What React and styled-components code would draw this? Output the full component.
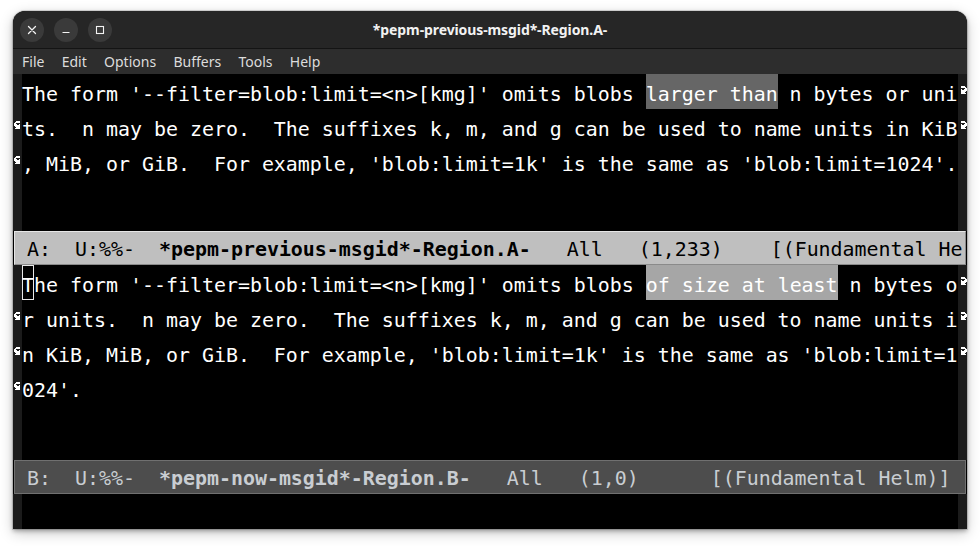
import React from "react";
import styled, { createGlobalStyle } from "styled-components";

const Global = createGlobalStyle`
  html, body { margin: 0; padding: 0; background: #ffffff; }
  body { width: 980px; height: 546px; overflow: hidden; }
`;

const MONO = `"DejaVu Sans Mono", "Liberation Mono", monospace`;
const UI = `"Noto Sans", "Open Sans", sans-serif`;

const Page = styled.div`
  box-sizing: border-box;
  width: 980px;
  height: 546px;
  padding: 11px 13px 0 13px;
`;

const Window = styled.div`
  width: 954px;
  height: 518px;
  display: flex;
  flex-direction: column;
  border-radius: 12px 12px 0 0;
  overflow: hidden;
  background: #000;
  box-shadow: 0 0 0 1px rgba(0, 0, 0, 0.12), 0 2px 4px rgba(0, 0, 0, 0.3),
    0 4px 14px rgba(0, 0, 0, 0.22);
`;

const TitleBar = styled.div`
  flex: none;
  height: 37px;
  display: grid;
  grid-template-columns: 1fr auto 1fr;
  align-items: center;
  background: #262626;
  border-bottom: 1px solid #141414;
`;

const Controls = styled.div`
  display: flex;
  gap: 10px;
  padding-left: 7px;
`;

const CircleButton = styled.div`
  width: 24px;
  height: 24px;
  border-radius: 50%;
  background: #3a3a3a;
  display: flex;
  align-items: center;
  justify-content: center;
`;

const Title = styled.div`
  font-family: ${UI};
  font-weight: 700;
  font-size: 14px;
  color: #f2f2f2;
  white-space: nowrap;
  letter-spacing: -0.1px;
`;

const MenuBar = styled.div`
  flex: none;
  height: 25px;
  display: flex;
  align-items: center;
  gap: 17.3px;
  padding-left: 9px;
  background: #2d2d2d;
  font-family: ${UI};
  font-size: 14px;
  color: #dcdcdc;
`;

const MenuItem = styled.span`
  white-space: nowrap;
`;

const Body = styled.div`
  flex: none;
  height: ${(p) => p.$h}px;
  display: flex;
  background: #1b1b1b;
  overflow: hidden;
`;

const Fringe = styled.div`
  width: 9px;
  flex: none;
  display: flex;
  flex-direction: column;
`;

const FringeCell = styled.div`
  height: 35px;
  box-sizing: border-box;
  padding-top: 12px;
  padding-left: ${(p) => (p.$side === "left" ? "1px" : "0")};
  display: flex;
  justify-content: ${(p) => (p.$side === "left" ? "flex-start" : "flex-end")};
  align-items: flex-start;
`;

const TextArea = styled.div`
  width: 936px;
  flex: none;
  background: #000;
  display: flex;
  flex-direction: column;
  font-family: ${MONO};
  font-size: 19.93px;
  color: #ffffff;
`;

const Line = styled.div`
  height: 35px;
  display: flex;
  white-space: pre;
`;

const Seg = styled.span`
  display: block;
  box-sizing: border-box;
  height: 35px;
  padding-top: 6px;
  line-height: 29px;
  background: ${(p) => p.$bg || "transparent"};
  box-shadow: ${(p) => (p.$cursor ? "inset 0 0 0 1px #e8e8e8" : "none")};
`;

const ModeLine = styled.div`
  flex: none;
  height: 34px;
  box-sizing: border-box;
  margin: 0 1px;
  padding-top: 4px;
  line-height: 28px;
  white-space: pre;
  overflow: hidden;
  font-family: ${MONO};
  font-size: 19.93px;
  border: 1px solid;
  border-color: ${(p) =>
    p.$active ? "#e6e6e6 #8a8a8a #8a8a8a #e6e6e6" : "#707070"};
  background: ${(p) => (p.$active ? "#bfbfbf" : "#4d4d4d")};
  color: ${(p) => (p.$active ? "#000000" : "#c9cdd2")};
`;

const Bold = styled.b`
  font-weight: 700;
`;

const LEFT_CURLY = [0x3c, 0x7c, 0xc0, 0xe4, 0xfc, 0x7c, 0x3c, 0x7c];
const RIGHT_CURLY = [0x3c, 0x3e, 0x03, 0x27, 0x3f, 0x3e, 0x3c, 0x3e];

function Bitmap({ bits }) {
  const rects = [];
  bits.forEach((row, y) => {
    for (let x = 0; x < 8; x++) {
      if (row & (0x80 >> x)) {
        rects.push(<rect key={`${x}-${y}`} x={x} y={y} width="1" height="1" />);
      }
    }
  });
  return (
    <svg width="8" height="8" viewBox="0 0 8 8" fill="#ffffff" shapeRendering="crispEdges">
      {rects}
    </svg>
  );
}

function CloseIcon() {
  return (
    <svg width="10" height="10" viewBox="0 0 10 10" stroke="#f4f4f4" strokeWidth="1.3" strokeLinecap="round">
      <path d="M1.5 1.5 L8.5 8.5 M8.5 1.5 L1.5 8.5" />
    </svg>
  );
}
function MinIcon() {
  return (
    <svg width="10" height="10" viewBox="0 0 10 10" stroke="#f4f4f4" strokeWidth="1.2">
      <path d="M1.5 7.5 H8.5" />
    </svg>
  );
}
function MaxIcon() {
  return (
    <svg width="10" height="10" viewBox="0 0 10 10" stroke="#f4f4f4" strokeWidth="1.1" fill="none">
      <rect x="1.5" y="1.5" width="7" height="7" />
    </svg>
  );
}

const HL_A = "#666666";
const HL_B = "#a6a6a6";

const windowA = [
  {
    right: true,
    segs: [
      { t: "The form '--filter=blob:limit=<n>[kmg]' omits blobs " },
      { t: "larger than", bg: HL_A },
      { t: " n bytes or uni" },
    ],
  },
  {
    left: true,
    right: true,
    segs: [{ t: "ts.  n may be zero.  The suffixes k, m, and g can be used to name units in KiB" }],
  },
  {
    left: true,
    segs: [{ t: ", MiB, or GiB.  For example, 'blob:limit=1k' is the same as 'blob:limit=1024'." }],
  },
];

const windowB = [
  {
    right: true,
    segs: [
      { t: "T", cursor: true },
      { t: "he form '--filter=blob:limit=<n>[kmg]' omits blobs " },
      { t: "of size at least", bg: HL_B },
      { t: " n bytes o" },
    ],
  },
  {
    left: true,
    right: true,
    segs: [{ t: "r units.  n may be zero.  The suffixes k, m, and g can be used to name units i" }],
  },
  {
    left: true,
    right: true,
    segs: [{ t: "n KiB, MiB, or GiB.  For example, 'blob:limit=1k' is the same as 'blob:limit=1" }],
  },
  {
    left: true,
    segs: [{ t: "024'." }],
  },
];

function EmacsWindow({ lines, height }) {
  return (
    <Body $h={height}>
      <Fringe>
        {lines.map((l, i) => (
          <FringeCell key={i} $side="left">
            {l.left && <Bitmap bits={LEFT_CURLY} />}
          </FringeCell>
        ))}
      </Fringe>
      <TextArea>
        {lines.map((l, i) => (
          <Line key={i}>
            {l.segs.map((s, j) => (
              <Seg key={j} $bg={s.bg} $cursor={s.cursor}>
                {s.t}
              </Seg>
            ))}
          </Line>
        ))}
      </TextArea>
      <Fringe>
        {lines.map((l, i) => (
          <FringeCell key={i} $side="right">
            {l.right && <Bitmap bits={RIGHT_CURLY} />}
          </FringeCell>
        ))}
      </Fringe>
    </Body>
  );
}

export default function App() {
  return (
    <>
      <Global />
      <Page>
        <Window>
          <TitleBar>
            <Controls>
              <CircleButton>
                <CloseIcon />
              </CircleButton>
              <CircleButton>
                <MinIcon />
              </CircleButton>
              <CircleButton>
                <MaxIcon />
              </CircleButton>
            </Controls>
            <Title>*pepm-previous-msgid*-Region.A-</Title>
            <div />
          </TitleBar>
          <MenuBar>
            {["File", "Edit", "Options", "Buffers", "Tools", "Help"].map((m) => (
              <MenuItem key={m}>{m}</MenuItem>
            ))}
          </MenuBar>
          <EmacsWindow lines={windowA} height={157} />
          <ModeLine $active>
            {" A:  U:%%-  "}
            <Bold>*pepm-previous-msgid*-Region.A-</Bold>
            {"   All   (1,233)    [(Fundamental He"}
          </ModeLine>
          <EmacsWindow lines={windowB} height={195} />
          <ModeLine>
            {" B:  U:%%-  "}
            <Bold>*pepm-now-msgid*-Region.B-</Bold>
            {"   All   (1,0)      [(Fundamental Helm)]"}
          </ModeLine>
          <EmacsWindow lines={[]} height={35} />
        </Window>
      </Page>
    </>
  );
}
